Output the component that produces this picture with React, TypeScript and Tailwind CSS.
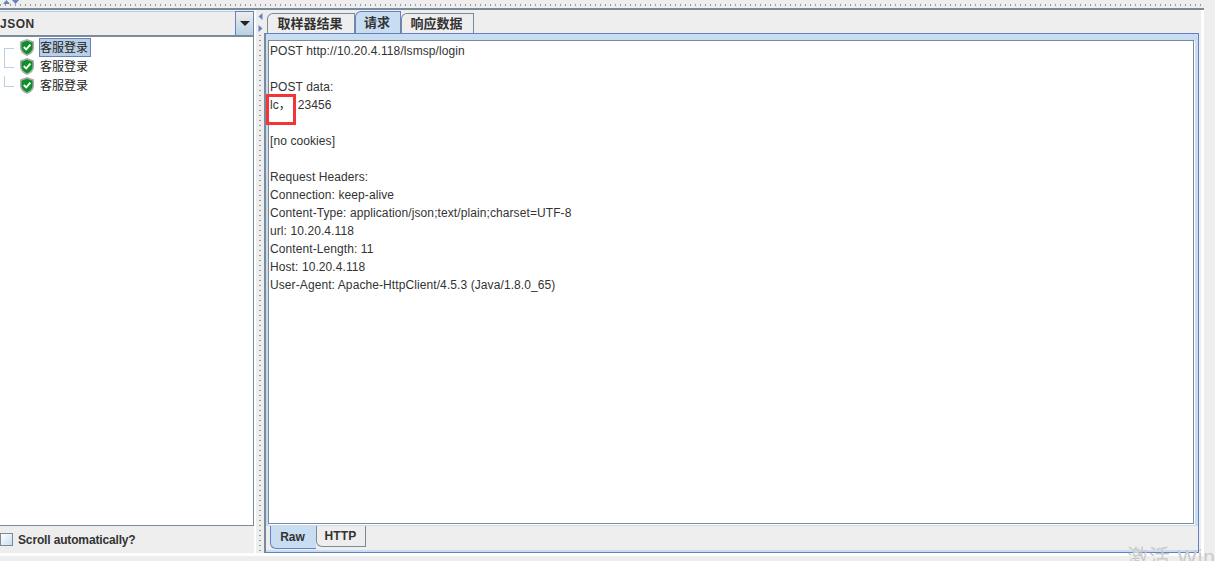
import type { ReactNode } from "react";

const FONT = "font-['Liberation_Sans','Noto_Sans_CJK_SC',sans-serif]";

const requestLines = [
  "POST http://10.20.4.118/lsmsp/login",
  "",
  "POST data:",
  "lc\uFF0C  23456",
  "",
  "[no cookies]",
  "",
  "Request Headers:",
  "Connection: keep-alive",
  "Content-Type: application/json;text/plain;charset=UTF-8",
  "url: 10.20.4.118",
  "Content-Length: 11",
  "Host: 10.20.4.118",
  "User-Agent: Apache-HttpClient/4.5.3 (Java/1.8.0_65)",
];

function ShieldIcon() {
  return (
    <svg width="14" height="17" viewBox="0 0 14 17" className="shrink-0">
      <path d="M7 0 L14 2.5 V8.5 C14 12.5 11 15.5 7 17 C3 15.5 0 12.5 0 8.5 V2.5 Z" fill="#a9aca9" />
      <path d="M7 1.8 L12.5 3.7 V8.5 C12.5 11.6 10 14 7 15.3 C4 14 1.5 11.6 1.5 8.5 V3.7 Z" fill="#0e8f29" />
      <path d="M3.8 8 L6.2 10.4 L10.4 5.6" fill="none" stroke="#ffffff" strokeWidth="1.9" />
    </svg>
  );
}

function TreeRow({ selected, first }: { selected?: boolean; first?: boolean }) {
  return (
    <div className="flex h-[19px] items-center">
      <div className="relative h-full w-[20px] shrink-0">
        <div className={`absolute left-[4px] w-px bg-[#b8cfe5] ${first ? "top-[10px] h-[9px]" : "top-0 h-[10px]"}`} />
        <div className="absolute left-[4px] top-[10px] h-px w-[10px] bg-[#b8cfe5]" />
      </div>
      <ShieldIcon />
      <span
        className={`ml-[5px] h-[19px] pl-px pr-[3px] text-[12px] leading-[21px] text-[#222] ${
          selected ? "bg-[#b8cfe5] outline outline-1 -outline-offset-1 outline-[#6382bf]" : ""
        }`}
      >
        客服登录
      </span>
    </div>
  );
}

function Tab({ children, active, wide }: { children: ReactNode; active?: boolean; wide: string }) {
  return (
    <div
      className={`flex items-center justify-center rounded-tl-[6px] border border-b-0 pr-[2px] text-[13px] font-bold text-[#333] ${wide} ${
        active ? "h-[22px] border-[#6382bf] bg-[#c8ddf2]" : "mt-[2px] h-[20px] border-[#7a8a99] bg-[#eeeeee]"
      }`}
    >
      {children}
    </div>
  );
}

export default function App() {
  return (
    <div className={`relative flex h-[561px] w-[1215px] flex-col overflow-hidden bg-[#eeeeee] ${FONT}`}>
      {/* top splitter */}
      <div className="flex h-[10px] w-[1204px] shrink-0 flex-col border-b-2 border-[#7a8a99]">
        <div className="flex h-[4px] items-start pl-[3px]">
          <svg width="16" height="4" viewBox="0 0 16 4">
            <path d="M0 4 L3.5 0 L7 4 Z" fill="#6382bf" />
            <path d="M9 0 H16 L12.5 4 Z" fill="#6382bf" />
          </svg>
        </div>
        <div className="h-[2px] bg-[repeating-linear-gradient(90deg,#9a9a9a_0_1px,transparent_1px_5px)]" />
      </div>

      <div className="flex h-[543px] shrink-0">
        {/* left panel */}
        <div className="flex w-[254px] shrink-0 flex-col">
          <div className="h-px shrink-0" />
          <div className="flex h-[26px] shrink-0 border-b-2 border-[#7a8a99] bg-[#eeeeee]">
            <div className="flex flex-1 items-center overflow-hidden border-t border-[#b8cfe5] text-[12px] font-bold tracking-[0.5px] text-[#333]">
              JSON
            </div>
            <div className="flex w-[19px] items-center justify-center border-x border-t border-[#6382bf] bg-gradient-to-b from-[#eeeeee] to-[#b8cfe5]">
              <svg width="10" height="5" viewBox="0 0 10 5">
                <path d="M0 0 H10 L5 5 Z" fill="#222" />
              </svg>
            </div>
          </div>
          <div className="flex-1 border-r border-b border-[#7a8a99] bg-white pt-px">
            <TreeRow selected first />
            <TreeRow />
            <TreeRow />
          </div>
          <div className="flex h-[27px] shrink-0 items-center">
            <div className="h-[13px] w-[13px] border border-[#7a8a99] bg-gradient-to-br from-white to-[#c8ddf2]" />
            <span className="ml-[5px] text-[12px] font-bold tracking-[-0.15px] text-[#333]">Scroll automatically?</span>
          </div>
        </div>

        {/* vertical splitter */}
        <div className="flex w-[10px] shrink-0 flex-col items-center border-l-2 border-white bg-[#eeeeee] pt-[3px]">
          <svg width="5" height="19" viewBox="0 0 5 19">
            <path d="M4.5 0 V7 L0.5 3.5 Z" fill="#6382bf" />
            <path d="M0.5 12 V19 L4.5 15.5 Z" fill="#6382bf" />
          </svg>
          <div className="mt-[3px] w-[2px] flex-1 bg-[repeating-linear-gradient(180deg,#9a9a9a_0_1px,transparent_1px_5px)]" />
        </div>

        {/* right panel */}
        <div className="flex w-[935px] shrink-0 flex-col pt-px">
          <div className="flex h-[22px] shrink-0 pl-[3px]">
            <Tab wide="w-[88px]">取样器结果</Tab>
            <Tab active wide="w-[46px]">请求</Tab>
            <Tab wide="w-[73px]">响应数据</Tab>
          </div>
          <div className="flex flex-1 flex-col border-y border-r border-l-2 border-y-[#6382bf] border-r-[#6382bf] border-l-[#7a8a99] bg-[#c8ddf2] pb-[2px]">
            <div className="flex flex-1 flex-col pb-[2px] pl-[2px] pr-[4px] pt-[6px]">
              <div className="flex-1 border border-[#7a8a99] bg-white pl-px pt-px text-[12px] leading-[18px] tracking-[0.09px] text-[#333] shadow-[1px_1px_0_#ffffff]">
                {requestLines.map((line, i) => (
                  <div key={i} className="h-[18px] whitespace-pre">
                    {line}
                  </div>
                ))}
              </div>
            </div>
            <div className="flex h-[24px] shrink-0 bg-[#eeeeee] pl-[4px]">
              <div className="flex h-[23px] w-[46px] items-center justify-center rounded-bl-[6px] border-b border-l border-[#6382bf] bg-[#c8ddf2] pr-[2px] text-[12px] font-bold text-[#333]">
                Raw
              </div>
              <div className="flex h-[21px] w-[50px] items-center justify-center rounded-bl-[6px] border border-t-0 border-[#7a8a99] pr-px text-[12px] font-bold tracking-[0.2px] text-[#333]">
                HTTP
              </div>
            </div>
          </div>
        </div>

        <div className="w-[2px] shrink-0" />
        <div className="w-[3px] shrink-0 bg-white" />
      </div>

      <div className="h-[3px] w-[1204px] shrink-0 bg-white" />

      {/* red annotation over the screenshot */}
      <div className="absolute left-[266px] top-[94px] h-[31px] w-[30px] border-[3px] border-[#f33535]" />
      {/* activation watermark */}
      <div className="absolute left-[1127px] top-[544px] whitespace-nowrap text-[21px] leading-[26px] tracking-[0.8px] text-[#cacaca]">激活 Win</div>
    </div>
  );
}
